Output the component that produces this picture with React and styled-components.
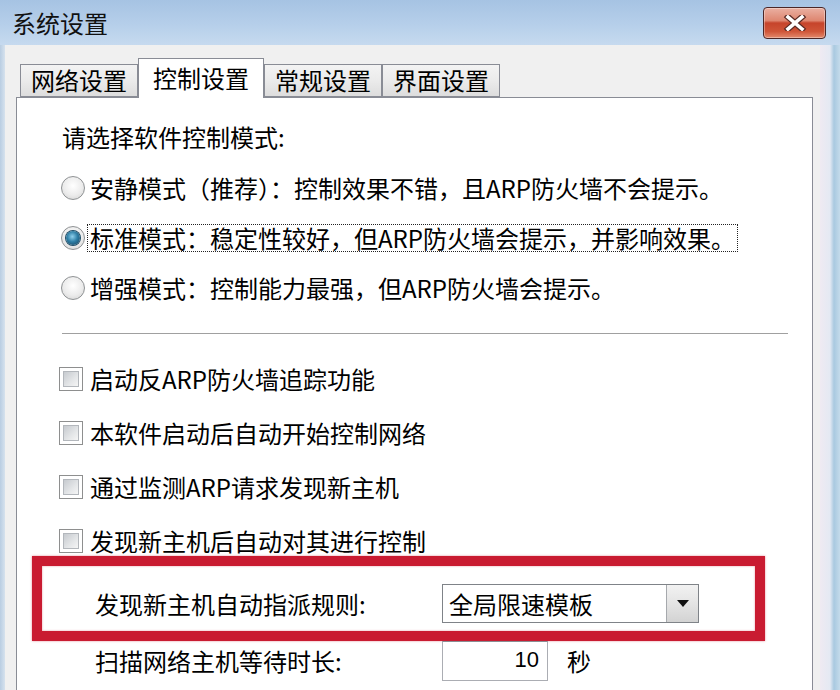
import styled, { createGlobalStyle } from "styled-components";

const GlobalStyle = createGlobalStyle`
  html, body {
    margin: 0;
    padding: 0;
  }
  body {
    font-family: "Noto Sans CJK SC", "Noto Sans", sans-serif;
    color: #000;
  }
  #root {
    width: 840px;
    height: 690px;
    overflow: hidden;
  }
`;

const Window = styled.div`
  width: 840px;
  height: 690px;
  display: flex;
  flex-direction: column;
  background: linear-gradient(
    90deg,
    #b9cde2 0px,
    #d6e2ee 5px,
    #d6e2ee calc(100% - 20px),
    #efeaf2 calc(100% - 20px),
    #e4e9f3 calc(100% - 10px),
    #a9c9e0 calc(100% - 6px),
    #c4dbeb 100%
  );
`;

const TitleBar = styled.div`
  height: 45px;
  flex: none;
  display: flex;
  justify-content: space-between;
  align-items: flex-start;
  padding: 7px 14px 0 12px;
  box-sizing: border-box;
  background: linear-gradient(180deg, #a6c3e3 0%, #b6cfea 55%, #c6daef 100%);
`;

const Title = styled.div`
  font-size: 24px;
  line-height: 32px;
  color: #111;
`;

const CloseButton = styled.div`
  width: 63px;
  height: 32px;
  box-sizing: border-box;
  border: 1px solid #4b2727;
  border-radius: 4px;
  display: flex;
  align-items: center;
  justify-content: center;
  background: linear-gradient(
    180deg,
    #eab0a2 0%,
    #de8670 42%,
    #c6442b 50%,
    #cf5538 78%,
    #e38a6d 100%
  );
  box-shadow: inset 0 0 0 1px rgba(255, 255, 255, 0.35);
`;

const Client = styled.div`
  flex: 1;
  min-height: 0;
  display: flex;
  flex-direction: column;
  margin: 0 20px 0 5px;
  padding: 0 7px 0 11px;
  background: #f0f0f0;
`;

const TabRow = styled.div`
  height: 52px;
  flex: none;
  display: flex;
  align-items: flex-end;
  padding-left: 4px;
`;

const Tab = styled.div`
  position: relative;
  box-sizing: border-box;
  height: ${(p) => (p.$active ? "40px" : "33px")};
  margin-bottom: ${(p) => (p.$active ? "-1px" : "0")};
  z-index: ${(p) => (p.$active ? 1 : 0)};
  padding: ${(p) => (p.$active ? "4px 14px 0" : "0 10px")};
  border: 1px solid #898c95;
  border-bottom: ${(p) => (p.$active ? "none" : "1px solid #898c95")};
  background: ${(p) =>
    p.$active ? "#fff" : "linear-gradient(180deg, #f3f3f3 0%, #ebebeb 50%, #dddddd 100%)"};
  font-size: 24px;
  line-height: 30px;
  white-space: nowrap;
`;

const Panel = styled.div`
  flex: 1;
  background: #fff;
  border: 1px solid #898c95;
  border-bottom: none;
  padding: 24px 24px 0 45px;
  display: flex;
  flex-direction: column;
`;

const Heading = styled.div`
  font-size: 24px;
  line-height: 30px;
  height: 30px;
`;

const OptionList = styled.div`
  display: flex;
  flex-direction: column;
  margin-top: ${(p) => p.$top || 0}px;
`;

const OptionRow = styled.div`
  height: ${(p) => p.$h}px;
  display: flex;
  align-items: center;
  gap: 3px;
`;

const RadioDot = styled.span`
  width: 24px;
  height: 24px;
  margin-left: -1px;
  box-sizing: border-box;
  border-radius: 50%;
  border: 1px solid #8f9294;
  flex: none;
  display: flex;
  align-items: center;
  justify-content: center;
  background: radial-gradient(circle at 50% 40%, #ffffff 0%, #ececec 55%, #cfcfcf 100%);

  &::after {
    content: "";
    width: 14px;
    height: 14px;
    border-radius: 50%;
    display: ${(p) => (p.$checked ? "block" : "none")};
    background: radial-gradient(circle at 45% 40%, #8fd0ec 0%, #2f7fa6 45%, #123d58 100%);
    box-shadow: 0 0 0 1px #1d4c66;
  }
`;

const CheckBox = styled.span`
  width: 24px;
  height: 24px;
  margin-left: -3px;
  margin-right: 2px;
  box-sizing: border-box;
  border: 1px solid #8e8f8f;
  flex: none;
  padding: 3px;
  background: #fff;

  &::after {
    content: "";
    display: block;
    width: 100%;
    height: 100%;
    box-sizing: border-box;
    border: 1px solid #b3b7bc;
    background: linear-gradient(135deg, #c6cacf 0%, #e4e6e8 60%, #f5f5f5 100%);
  }
`;

const OptionText = styled.span`
  display: inline-block;
  font-size: 24px;
  line-height: 26px;
  padding: 0 2px;
  white-space: nowrap;
  outline: ${(p) => (p.$focused ? "1px dotted #222" : "none")};
`;

const Separator = styled.div`
  margin-top: 20px;
  border-top: 1px solid #a0a0a0;
  border-bottom: 1px solid #fff;
`;

const Highlight = styled.div`
  margin: -12px 0 0 -30px;
  width: 733px;
  box-sizing: border-box;
  border: 10px solid #c91b31;
  box-shadow: 0 0 2px rgba(201, 27, 49, 0.5), inset 0 0 2px rgba(201, 27, 49, 0.5);
  padding: 18px 0 8px 53px;
`;

const FieldRow = styled.div`
  display: flex;
  align-items: center;
  height: ${(p) => p.$h}px;
  padding-left: ${(p) => p.$indent || 0}px;
`;

const FieldLabel = styled.span`
  width: 347px;
  flex: none;
  font-size: 24px;
  line-height: 30px;
  white-space: nowrap;
`;

const Select = styled.div`
  width: 257px;
  height: 39px;
  box-sizing: border-box;
  border: 1px solid #7f8388;
  display: flex;
  align-items: stretch;
  background: #fff;
`;

const SelectValue = styled.span`
  flex: 1;
  padding-left: 6px;
  font-size: 24px;
  line-height: 37px;
`;

const SelectArrow = styled.span`
  width: 31px;
  flex: none;
  border-left: 1px solid #a6a9ad;
  display: flex;
  align-items: center;
  justify-content: center;
  background: linear-gradient(180deg, #f2f2f2 0%, #e4e4e4 50%, #d3d3d3 100%);
`;

const NumberInput = styled.div`
  width: 106px;
  height: 40px;
  box-sizing: border-box;
  border: 1px solid #abadb3;
  border-top-color: #8a8d93;
  padding-right: 8px;
  text-align: right;
  font-family: "Liberation Sans", "Noto Sans", sans-serif;
  font-size: 22px;
  line-height: 36px;
  background: #fff;
`;

const Unit = styled.span`
  margin-left: 19px;
  font-size: 24px;
  line-height: 30px;
`;

const tabs = ["网络设置", "控制设置", "常规设置", "界面设置"];

const modes = [
  { text: "安静模式（推荐）：控制效果不错，且ARP防火墙不会提示。" },
  { text: "标准模式：稳定性较好，但ARP防火墙会提示，并影响效果。", checked: true },
  { text: "增强模式：控制能力最强，但ARP防火墙会提示。" },
];

const options = [
  "启动反ARP防火墙追踪功能",
  "本软件启动后自动开始控制网络",
  "通过监测ARP请求发现新主机",
  "发现新主机后自动对其进行控制",
];

const CloseGlyph = () => (
  <svg width="24" height="16" viewBox="0 0 24 16">
    <path d="M5 2 L19 14 M19 2 L5 14" stroke="#5a2a24" strokeWidth="6" strokeLinecap="square" />
    <path d="M5 2 L19 14 M19 2 L5 14" stroke="#fff" strokeWidth="3.6" strokeLinecap="square" />
  </svg>
);

const App = () => {
  return (
    <Window>
      <GlobalStyle />
      <TitleBar>
        <Title>系统设置</Title>
        <CloseButton>
          <CloseGlyph />
        </CloseButton>
      </TitleBar>

      <Client>
        <TabRow>
          {tabs.map((t, i) => (
            <Tab key={t} $active={i === 1}>
              {t}
            </Tab>
          ))}
        </TabRow>

        <Panel>
          <Heading>请选择软件控制模式:</Heading>

          <OptionList $top={11}>
            {modes.map((m) => (
              <OptionRow key={m.text} $h={50}>
                <RadioDot $checked={m.checked} />
                <OptionText $focused={m.checked}>{m.text}</OptionText>
              </OptionRow>
            ))}
          </OptionList>

          <Separator />

          <OptionList $top={17}>
            {options.map((o) => (
              <OptionRow key={o} $h={54}>
                <CheckBox />
                <OptionText>{o}</OptionText>
              </OptionRow>
            ))}
          </OptionList>

          <Highlight>
            <FieldRow $h={39}>
              <FieldLabel>发现新主机自动指派规则:</FieldLabel>
              <Select>
                <SelectValue>全局限速模板</SelectValue>
                <SelectArrow>
                  <svg width="12" height="7" viewBox="0 0 12 7">
                    <polygon points="0,0 12,0 6,7" fill="#111" />
                  </svg>
                </SelectArrow>
              </Select>
            </FieldRow>
          </Highlight>

          <FieldRow $h={40} $indent={33}>
            <FieldLabel>扫描网络主机等待时长:</FieldLabel>
            <NumberInput>10</NumberInput>
            <Unit>秒</Unit>
          </FieldRow>
        </Panel>
      </Client>
    </Window>
  );
};

export default App;
